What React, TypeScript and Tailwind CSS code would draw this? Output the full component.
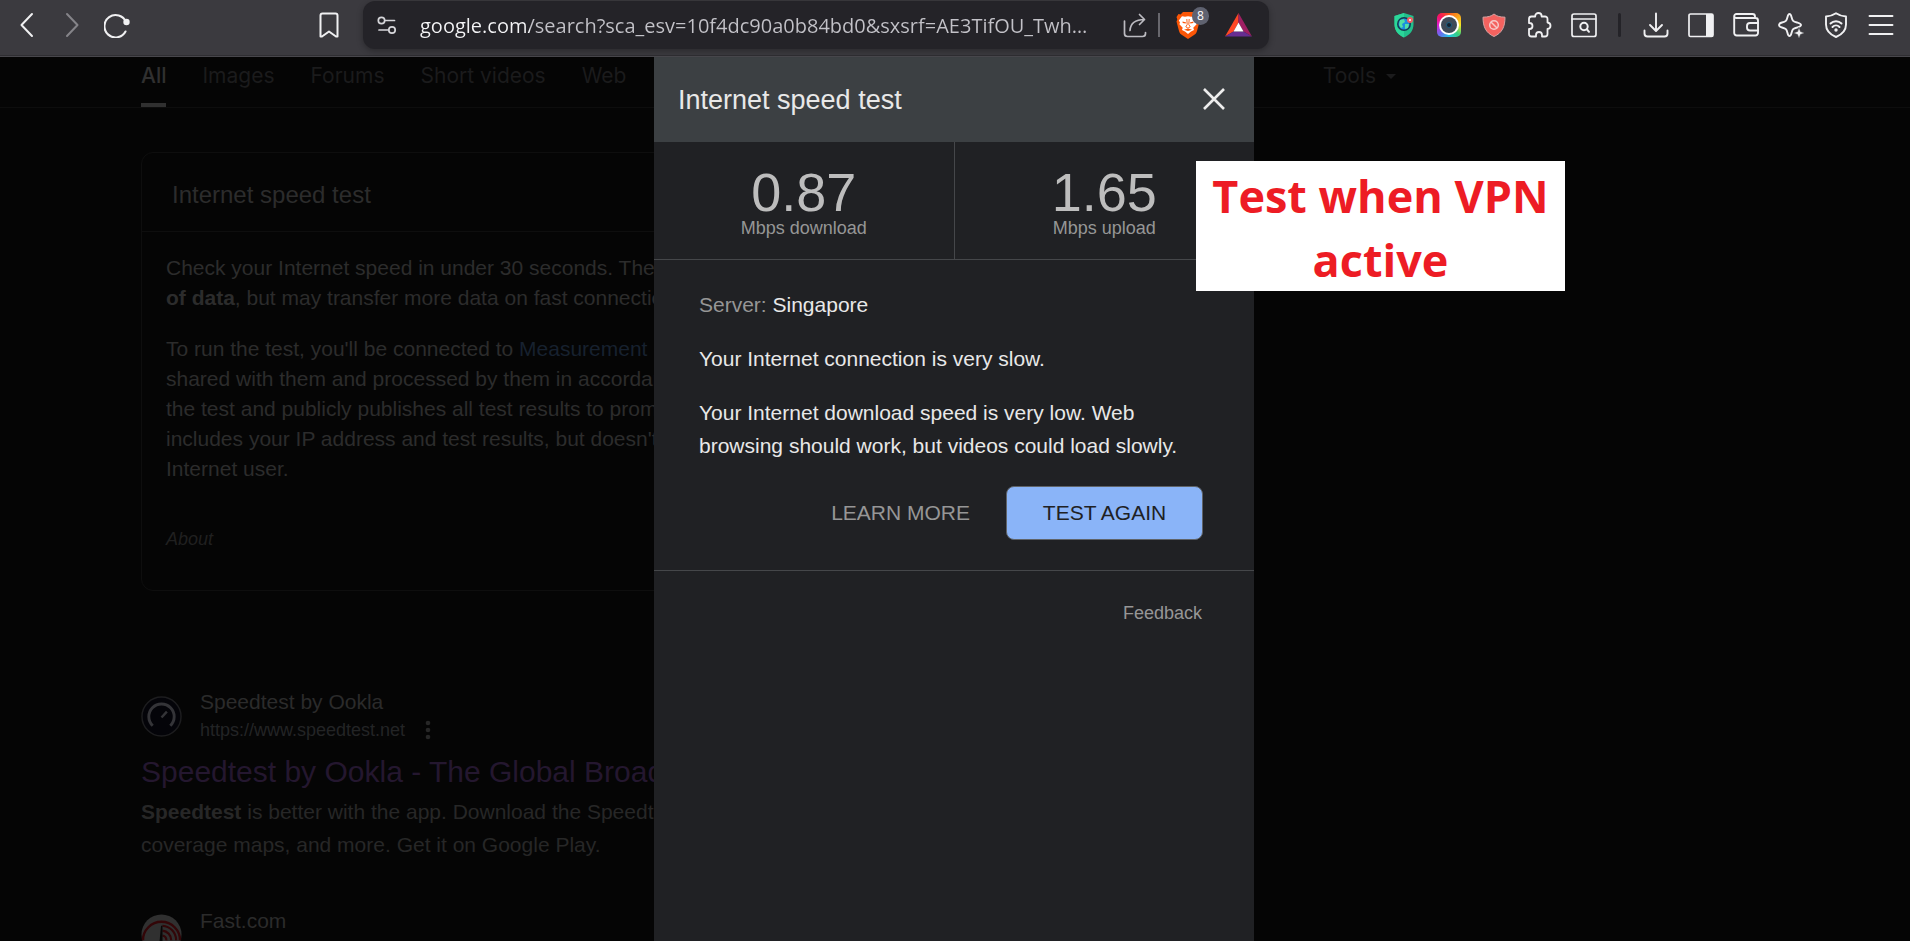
import type { ReactNode } from "react";

type IconProps = { children: ReactNode; className?: string };

/* Shared 26px line-icon frame */
function Icon({ children, className = "text-[#f0f0f2]" }: IconProps) {
  return (
    <svg
      viewBox="0 0 26 26"
      width="26"
      height="26"
      fill="none"
      stroke="currentColor"
      strokeWidth="1.7"
      strokeLinecap="round"
      strokeLinejoin="round"
      className={className}
      aria-hidden="true"
    >
      {children}
    </svg>
  );
}

function ToolButton({ label, children }: { label: string; children: ReactNode }) {
  return (
    <button type="button" aria-label={label} className="flex h-11 w-[45px] shrink-0 items-center justify-center">
      {children}
    </button>
  );
}

function BraveShield() {
  return (
    <span className="relative flex size-7 items-center justify-center">
      <svg viewBox="0 0 24 28" width="24" height="28" aria-hidden="true">
        <path d="M7 1h10l2.500 2.500 2-.5L23.500 6l-.8 2.500.8 2-2.500 9.500c-.5 2-1.500 3-3 4L12 28l-6-4c-1.500-1-2.500-2-3-4L.5 10.500l.8-2L.5 6l2-3 2 .5z" fill="#fb5607" />
        <path d="M6 5.200 9 5.800l3-.6 3 .6 3-.6 3.200 4.300-1.200 2 .6 1.700-3.300 3.600.7 2.200-3 1.500-3 2.500-3-2.500-3-1.500.7-2.200-3.300-3.600.6-1.700-1.200-2z" fill="#fff" />
        <path d="M6.500 10.500l3.800 1-.8 1-2.800-.6zM17.500 10.500l-3.800 1 .8 1 2.800-.6z" fill="#fb5607" />
        <path d="M10.800 8l.4 5.500-1.400 2.300 2.200 1.400 2.200-1.400-1.400-2.300.4-5.500" fill="none" stroke="#fb5607" strokeWidth="0.9" />
        <path d="M8 18.800l4-1.200 4 1.200-4 1.200z" fill="#fb5607" />
      </svg>
      <span className="absolute -top-1 left-[18px] flex h-[18px] w-[17px] items-center justify-center rounded-full bg-[#5f6270] font-['Open_Sans',sans-serif] text-[12px] text-white">
        8
      </span>
    </span>
  );
}

function Toolbar() {
  return (
    <header className="z-20 flex h-[57px] shrink-0 border-b border-[#48474c] bg-[#3b3a3f] shadow-[inset_0_-1px_0_#2f2e32]">
      <div className="flex w-[306px] shrink-0 items-start pt-[3px] pl-1">
        <ToolButton label="Back">
          <Icon><path d="M18 2 7.500 13 18 24" strokeWidth="2" /></Icon>
        </ToolButton>
        <ToolButton label="Forward">
          <Icon className="text-[#858489]"><path d="M8 2l10.500 11L8 24" strokeWidth="2" /></Icon>
        </ToolButton>
        <ToolButton label="Reload">
          <Icon>
            <path d="M22 10A11.200 11.200 0 1 0 21.500 19.500" strokeWidth="2.100" />
            <circle cx="22.500" cy="10" r="3.200" fill="currentColor" stroke="none" />
          </Icon>
        </ToolButton>
      </div>
      <div className="flex pt-[3px]">
        <ToolButton label="Bookmark this page">
          <Icon><path d="M4.500 3.500a2 2 0 0 1 2-2h13a2 2 0 0 1 2 2V24.500h-1.500l-7-5-7 5H4.500z" strokeWidth="2" /></Icon>
        </ToolButton>
      </div>
      <div className="mt-px ml-3 flex h-12 min-w-0 flex-1 items-center rounded-xl bg-[#242328] pr-1 shadow-[0_2px_6px_rgba(0,0,0,0.3)]">
        <button type="button" aria-label="Site settings" className="flex h-full w-12 shrink-0 items-center justify-center">
          <Icon className="text-[#d6d6da]">
            <circle cx="7.500" cy="8.500" r="3.200" />
            <path d="M11 8.500h9.500" />
            <circle cx="18" cy="18" r="3.200" />
            <path d="M5 18h9.500" />
          </Icon>
        </button>
        <input
          type="text"
          aria-label="Address"
          readOnly
          defaultValue="google.com/search?sca_esv=10f4dc90a0b84bd0&sxsrf=AE3TifOU_Twh…"
          className="ml-[9px] min-w-0 flex-1 bg-[linear-gradient(90deg,#f4f4f6_110px,#c3c2c8_110px)] bg-clip-text pt-0.5 font-['Open_Sans',sans-serif] text-[20px] text-transparent outline-none"
        />
        <button type="button" aria-label="Share" className="flex w-11 items-center justify-center">
          <Icon className="text-[#bcbbc1]">
            <path d="M2.500 9v12.500a3 3 0 0 0 3 3h15a3 3 0 0 0 3-3V20.500" />
            <path d="M8 18.500C8.500 11 13 7.500 22.500 7.500M17.500 2.500l5 5-5 5" />
          </Icon>
        </button>
        <span className="mx-px h-6 w-0.5 bg-[#68676d]" />
        <button type="button" aria-label="Shields" className="ml-[3px] flex h-full w-12 items-center justify-center">
          <BraveShield />
        </button>
        <button type="button" aria-label="Rewards" className="flex h-full w-[53px] items-center justify-center">
          <svg viewBox="0 0 27 24" width="27" height="24" aria-hidden="true">
            <path d="M13.500 0 0 23.500l8.500-5 5-9z" fill="#ff4724" />
            <path d="M13.500 0 27 23.500l-8.500-5-5-9z" fill="#9e1f63" />
            <path d="M0 23.500h27l-8.500-5h-10z" fill="#662d91" />
            <path d="m13.500 9.500 5 9h-10z" fill="#fff" />
          </svg>
        </button>
      </div>
      <div className="ml-28 flex shrink-0 items-start pt-[3px] pr-[7px]">
        <ToolButton label="VPN extension">
          <svg viewBox="0 0 26 26" width="26" height="26" aria-hidden="true">
            <path d="M13 1 22.500 4v8c0 7-4 11-9.500 13.500C7.500 23 3.500 19 3.500 12V4z" fill="#22c08c" />
            <path d="M13 1v24.500C7.500 23 3.500 19 3.500 12V4z" fill="#2bd699" />
            <circle cx="13" cy="12" r="7" fill="#143a52" />
            <circle cx="13" cy="12" r="5.500" fill="#1b8fe0" />
            <path d="M9 8l4-1 1 3-3 2 1 3-2 1-2-3zM14 12l4 0-1 4-3 1z" fill="#52e0a4" />
            <circle cx="19" cy="8" r="3" fill="#f25c62" />
            <circle cx="19" cy="8" r="1" fill="#fff" />
          </svg>
        </ToolButton>
        <ToolButton label="Camera extension">
          <span className="flex size-6 items-center justify-center rounded-[5px] bg-[conic-gradient(from_45deg,#f9a01b,#f5e625,#35d07f,#22c7e8,#6a6cf0,#e11bd0,#f5165a,#f9581b,#f9a01b)]">
            <span className="flex size-5 items-center justify-center rounded-full bg-white">
              <span className="flex size-4 items-center justify-center rounded-full bg-[#3f4b58]">
                <span className="size-1.5 rounded-full border border-[#1b5d80] bg-[#15212e]" />
              </span>
            </span>
          </span>
        </ToolButton>
        <ToolButton label="Blocker extension">
          <svg viewBox="0 0 26 26" width="26" height="26" fill="none" aria-hidden="true">
            <path d="M13 2c3 2.500 6 3 11 3.200C24 15 21 21 13 24.500 5 21 2 15 2 5.200 7 5 10 4.500 13 2z" fill="#f4625f" stroke="#d6a3a3" strokeWidth="1" />
            <circle cx="13" cy="13" r="4.300" stroke="#f6c9c8" strokeWidth="1.500" />
            <path d="m10 10 6 6" stroke="#f6c9c8" strokeWidth="1.500" />
          </svg>
        </ToolButton>
        <ToolButton label="Extensions">
          <Icon>
            <path d="M3 7q0-2.500 2.500-2.500H9.200V4a3.200 3 0 0 1 6.400 0v.5H19a2.500 2.500 0 0 1 2.500 2.500V10.500c4 .5 4 6 0 6.500v5a2.500 2.500 0 0 1-2.500 2.500h-3V23a3 3 0 0 0-6 0v1.500H5.500A2.500 2.500 0 0 1 3 22v-5h.5a3 3 0 0 0 0-6H3z" strokeWidth="1.800" />
          </Icon>
        </ToolButton>
        <ToolButton label="Search page">
          <Icon>
            <rect x="1" y="2" width="24" height="22.500" rx="2" />
            <path d="M1 7h24" strokeWidth="1.500" />
            <circle cx="13" cy="14.500" r="3.700" strokeWidth="2" />
            <path d="m16 17.500 2 2.300" strokeWidth="2" />
          </Icon>
        </ToolButton>
        <span className="flex h-11 w-[27px] items-center justify-center">
          <span className="h-6 w-[3px] rounded-full bg-[#242328]" />
        </span>
        <ToolButton label="Downloads">
          <Icon>
            <path d="M13 1.500V18M7 13l6 6 6-6M1.500 18.500v3a3 3 0 0 0 3 3h17a3 3 0 0 0 3-3v-3" strokeWidth="1.900" />
          </Icon>
        </ToolButton>
        <ToolButton label="Sidebar">
          <Icon>
            <rect x="1" y="2" width="24" height="22.500" rx="1.500" />
            <path d="M18 2h7v22.500h-7z" fill="currentColor" stroke="none" />
          </Icon>
        </ToolButton>
        <ToolButton label="Wallet">
          <Icon>
            <path d="M22 6V4.500A2.500 2.500 0 0 0 19.500 2H3.500A2.200 2.200 0 0 0 1.200 4.200V21a2.500 2.500 0 0 0 2.500 2.500H22.500a2.500 2.500 0 0 0 2.500-2.500V8.500A2.500 2.500 0 0 0 22.500 6H3.500A2 2 0 0 1 1.200 4.200" strokeWidth="1.900" />
            <path d="M25 11H17a3 3 0 0 0-3 3v1.500a3 3 0 0 0 3 3h8" strokeWidth="1.900" />
          </Icon>
        </ToolButton>
        <ToolButton label="AI assistant">
          <Icon>
            <path d="M11.500 2c1.200 0 1.500 1 2 3 1 4 1.500 4.500 5.500 5.500 2.500.7 4 1 4 2.500s-1.500 1.800-4 2.500c-4 1-4.500 1.500-5.500 5.500-.5 2-.8 3-2 3s-1.500-1-2-3c-1-4-1.500-4.500-5.500-5.500-2-.5-3-1-3-2.500s1-2 3-2.500c4-1 4.500-1.500 5.500-5.500.5-2 .8-3 2-3z" strokeWidth="1.900" />
            <path d="M21 15.500l1.500 4 4 1.500-4 1.500L21 26.500l-1.500-4-4-1.500 4-1.500z" fill="currentColor" stroke="#3b3a3f" strokeWidth="0.500" />
          </Icon>
        </ToolButton>
        <ToolButton label="VPN">
          <Icon>
            <path d="M13 1.200c3 2 6 3 10 3.300v8c0 6-4 10-10 12.500C7 22.500 3 18.500 3 12.500v-8c4-.3 7-1.300 10-3.300z" strokeWidth="1.900" />
            <path d="M7.500 11.500c3-3 8-3 11 0M9.500 15c2-2 5-2 7 0" strokeWidth="2" />
            <circle cx="13" cy="18" r="1.700" fill="currentColor" stroke="none" />
          </Icon>
        </ToolButton>
        <ToolButton label="Menu">
          <Icon><path d="M1.500 4h23M1.500 13h23M1.500 22h23" strokeWidth="1.900" /></Icon>
        </ToolButton>
      </div>
    </header>
  );
}

function Tabs() {
  return (
    <nav className="h-[51px] border-b border-[#0d0d0d] pl-[141px] font-['Inter',sans-serif] text-[21px] leading-[38px] text-[#1b1b1c]">
      <div className="flex max-w-[1255px] justify-between">
        <div className="flex gap-9">
          <a href="#all" className="h-[50px] border-b-4 border-[#303030] font-medium text-[#303030]">All</a>
          <a href="#images">Images</a>
          <a href="#forums">Forums</a>
          <a href="#videos">Short videos</a>
          <a href="#web">Web</a>
        </div>
        <button type="button" className="flex h-[38px] items-center gap-2.5">
          Tools
          <svg viewBox="0 0 10 5" width="10" height="5" aria-hidden="true"><path d="M0 0h10L5 5z" fill="currentColor" /></svg>
        </button>
      </div>
    </nav>
  );
}

function SpeedCard() {
  return (
    <section className="w-[978px] overflow-hidden rounded-xl border border-[#0e0e0e] text-[21px] leading-[30px] whitespace-nowrap text-[#2c2c2c]">
      <h2 className="flex h-[79px] items-center border-b border-[#0e0e0e] pt-1.5 pl-[30px] text-[24px]">Internet speed test</h2>
      <div className="px-6 pt-[21px] pb-9">
        <p>
          Check your Internet speed in under 30 seconds. The speed<br />
          <b>of data</b>, but may transfer more data on fast connections.
        </p>
        <p className="mt-[21px]">
          To run the test, you'll be connected to <a href="#mlab" className="text-[#17212f]">Measurement Lab</a><br />
          shared with them and processed by them in accordance<br />
          the test and publicly publishes all test results to promote<br />
          includes your IP address and test results, but doesn't<br />
          Internet user.
        </p>
        <p className="mt-10 text-[18px] text-[#202020] italic">About</p>
      </div>
    </section>
  );
}

function Results() {
  return (
    <div className="text-[21px] leading-[33px] whitespace-nowrap text-[#272727]">
      <article>
        <div className="flex items-center gap-[18px]">
          <svg viewBox="0 0 42 42" width="41" height="41" fill="none" aria-hidden="true">
            <circle cx="21" cy="21" r="20" fill="#040409" stroke="#1d1d1f" strokeWidth="1.500" />
            <path d="M12 30.500A13 13 0 1 1 30 30.500" stroke="#343438" strokeWidth="3" />
            <path d="m21 22 5.500-6" stroke="#343438" strokeWidth="2.500" />
          </svg>
          <div>
            <div className="leading-7 text-[#2b2b2b]">Speedtest by Ookla</div>
            <div className="flex items-center gap-5 text-[18px] leading-7 text-[#232425]">
              https://www.speedtest.net
              <svg viewBox="0 0 6 20" width="6" height="20" fill="#272727" aria-hidden="true">
                <circle cx="3" cy="3" r="2.300" /><circle cx="3" cy="10" r="2.300" /><circle cx="3" cy="17" r="2.300" />
              </svg>
            </div>
          </div>
        </div>
        <h3 className="mt-2 text-[30px] leading-10 text-[#24172f]">
          <a href="#speedtest">Speedtest by Ookla - The Global Broadband</a>
        </h3>
        <p className="mt-[3px]">
          <b>Speedtest</b> is better with the app. Download the Speedtest<br />
          coverage maps, and more. Get it on Google Play.
        </p>
      </article>
      <article className="mt-[46px] flex items-start gap-[18px]">
        <svg viewBox="0 0 42 42" width="41" height="41" fill="none" className="mt-[7px]" aria-hidden="true">
          <circle cx="21" cy="21" r="20.500" fill="#303030" />
          <path d="M2 27A19 19 0 0 1 40 27" stroke="#330608" strokeWidth="2.500" />
          <path d="M22 12a15 15 0 0 1 14 15M22 17a10 10 0 0 1 9 10M22 22a5 5 0 0 1 4 5" stroke="#330608" strokeWidth="2.200" />
          <path d="M20.500 12h1.500v16h-3z" fill="#070707" />
        </svg>
        <div className="leading-7 text-[#2b2b2b]">Fast.com</div>
      </article>
    </div>
  );
}

function Metric({ value, unit }: { value: string; unit: string }) {
  return (
    <div className="flex flex-1 flex-col items-center pt-6">
      <span className="text-[54px] leading-[52px] text-[#bdbdbd]">{value}</span>
      <span className="text-[18px] leading-5 text-[#969696]">{unit}</span>
    </div>
  );
}

function SpeedDialog() {
  return (
    <section role="dialog" aria-label="Internet speed test" className="w-[600px] bg-[#202124] text-[21px] text-[#e8e8e8]">
      <div className="flex h-[85px] items-center justify-between bg-[#3c4043] pr-[29px] pl-6">
        <h2 className="pt-0.5 text-[27px]">Internet speed test</h2>
        <button type="button" aria-label="Close" className="pb-0.5">
          <svg viewBox="0 0 22 22" width="22" height="22" stroke="#ededed" strokeWidth="2.600" aria-hidden="true">
            <path d="M1 1l20 20M21 1 1 21" />
          </svg>
        </button>
      </div>
      <div className="flex h-[118px] divide-x divide-[#45474a] border-b border-[#45474a]">
        <Metric value="0.87" unit="Mbps download" />
        <Metric value="1.65" unit="Mbps upload" />
      </div>
      <div className="border-b border-[#45474a] px-[45px] pt-7 pb-[30px] leading-[33px]">
        <p><span className="text-[#969696]">Server:</span> Singapore</p>
        <p className="mt-[21px]">Your Internet connection is very slow.</p>
        <p className="mt-[21px]">Your Internet download speed is very low. Web browsing should work, but videos could load slowly.</p>
        <div className="mt-6 flex items-center justify-end gap-9 pr-1.5">
          <button type="button" className="pb-0.5 text-[#969696]">LEARN MORE</button>
          <button type="button" className="h-[54px] w-[197px] rounded-lg border border-[#5f6368] bg-[#8ab4f8] pb-0.5 text-[#202124]">TEST AGAIN</button>
        </div>
      </div>
      <div className="flex justify-end pt-7 pr-[52px] text-[18px] leading-7 text-[#969696]">
        <button type="button">Feedback</button>
      </div>
    </section>
  );
}

export default function App() {
  return (
    <div className="flex h-screen flex-col overflow-hidden bg-[#050505] font-['Liberation_Sans',Arial,sans-serif]">
      <Toolbar />
      <div className="relative min-h-0 flex-1 overflow-hidden">
        <Tabs />
        <main className="flex flex-col gap-[97px] pt-11 pl-[141px]">
          <SpeedCard />
          <Results />
        </main>
        <div className="absolute inset-0 flex justify-center pr-0.5">
          <SpeedDialog />
        </div>
        <p className="absolute top-[104px] left-[1196px] flex h-[130px] w-[369px] items-center justify-center bg-white px-4 pt-1 text-center font-['Open_Sans',sans-serif] text-[45px] leading-[64px] font-bold text-[#ed1c24]">
          Test when VPN active
        </p>
      </div>
    </div>
  );
}
